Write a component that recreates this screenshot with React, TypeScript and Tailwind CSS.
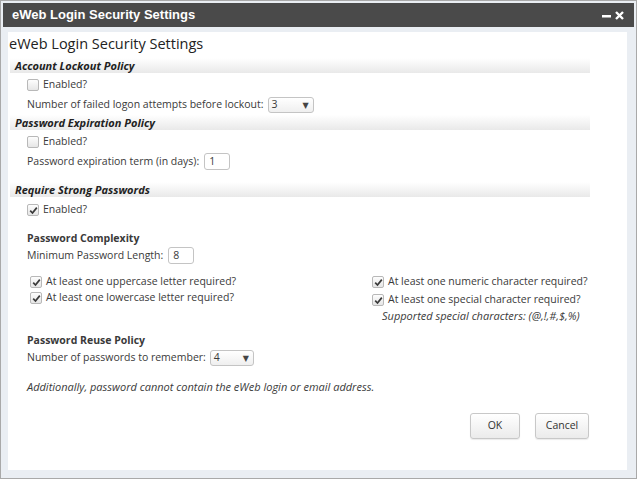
import { ReactNode } from 'react'

const FONT = { fontFamily: '"Open Sans", "DejaVu Sans", sans-serif' }

function Check({ checked }: { checked?: boolean }) {
  return (
    <span className="inline-flex h-[12px] w-[12px] shrink-0 items-center justify-center rounded-[2px] border border-[#b8b8b8] bg-gradient-to-b from-[#fdfdfd] to-[#e6e6e6]">
      {checked && (
        <svg width="9" height="9" viewBox="0 0 9 9">
          <path d="M1.2 4.6 L3.5 7 L7.8 1.6" fill="none" stroke="#3a3a3a" strokeWidth="1.7" />
        </svg>
      )}
    </span>
  )
}

function CheckRow({ checked, label, className = '' }: { checked?: boolean; label: string; className?: string }) {
  return (
    <div className={`flex items-center gap-[4px] ${className}`}>
      <Check checked={checked} />
      <span>{label}</span>
    </div>
  )
}

function SectionBar({ children }: { children: ReactNode }) {
  return (
    <div className="mx-[2px] h-[15px] w-[580px] bg-gradient-to-b from-white to-[#e9e9e9] pl-[5px] text-[11px] font-bold italic leading-[15px] text-[#222]">
      {children}
    </div>
  )
}

function Select({ value, w }: { value: string; w: string }) {
  return (
    <span className={`ml-[4px] inline-flex h-[16px] ${w} items-center justify-between rounded-[3px] border border-[#c4c4c4] bg-gradient-to-b from-white to-[#efefef] pl-[3px] pr-[4px] text-[10.5px]`}>
      <span>{value}</span>
      <span className="text-[8px] text-[#444]">▼</span>
    </span>
  )
}

function TextBox({ value }: { value: string }) {
  return (
    <span className="ml-[5px] inline-flex h-[17px] w-[26px] items-center rounded-[3px] border border-[#c4c4c4] bg-white pl-[4px] text-[10.5px]">
      {value}
    </span>
  )
}

function Btn({ children, w }: { children: ReactNode; w: string }) {
  return (
    <button className={`h-[26px] ${w} rounded-[3px] border border-[#c8c8c8] bg-gradient-to-b from-white to-[#ebebeb] text-[10.5px] text-[#333] shadow-[0_1px_1px_rgba(0,0,0,0.08)]`}>
      {children}
    </button>
  )
}

export default function App() {
  return (
    <div style={FONT} className="flex h-[479px] w-[637px] flex-col border border-[#a9a9a9] bg-[#eaeef3] p-[2px] text-[10.5px] text-[#3a3a3a]">
      <div className="flex h-[24px] shrink-0 items-center justify-between bg-[#4a4a4a] pl-[9px] pr-[10px]">
        <span className="text-[13px] font-bold text-white" style={{ fontFamily: '"Liberation Sans", Arial, sans-serif' }}>
          eWeb Login Security Settings
        </span>
        <span className="flex items-center gap-[4px]">
          <svg width="9" height="9" viewBox="0 0 9 9"><rect x="0" y="4" width="9" height="2.5" fill="#fff" /></svg>
          <svg width="9" height="9" viewBox="0 0 9 9"><path d="M1 1 L8 8 M8 1 L1 8" stroke="#fff" strokeWidth="2.4" /></svg>
        </span>
      </div>

      <div className="ml-[5px] mr-[7px] mt-[5px] flex-1 bg-white pt-[2px]">
        <div className="pl-[1px] text-[14.5px] leading-[20px] text-[#222]">eWeb Login Security Settings</div>

        <div className="mt-[4px]">
          <SectionBar>Account Lockout Policy</SectionBar>
          <div className="pl-[19px]">
            <CheckRow label="Enabled?" className="mt-[3px] h-[18px]" />
            <div className="flex h-[21px] items-center">
              Number of failed logon attempts before lockout:
              <Select value="3" w="w-[46px]" />
            </div>
          </div>
        </div>

        <div>
          <SectionBar>Password Expiration Policy</SectionBar>
          <div className="pl-[19px]">
            <CheckRow label="Enabled?" className="mt-[3px] h-[18px]" />
            <div className="flex h-[21px] items-center">
              Password expiration term (in days):
              <TextBox value="1" />
            </div>
          </div>
        </div>

        <div className="mt-[10px]">
          <SectionBar>Require Strong Passwords</SectionBar>
          <div className="pl-[19px]">
            <CheckRow checked label="Enabled?" className="mt-[4px] h-[18px]" />

            <div className="mt-[11px] h-[16px] font-bold leading-[16px]">Password Complexity</div>
            <div className="flex h-[19px] items-center">
              Minimum Password Length:
              <TextBox value="8" />
            </div>

            <div className="mt-[9px] flex">
              <div className="w-[345px] pl-[3px]">
                <CheckRow checked label="At least one uppercase letter required?" className="h-[16px]" />
                <CheckRow checked label="At least one lowercase letter required?" className="h-[16px]" />
              </div>
              <div>
                <CheckRow checked label="At least one numeric character required?" className="h-[16px]" />
                <CheckRow checked label="At least one special character required?" className="mt-[2px] h-[16px]" />
                <div className="h-[16px] pl-[10px] text-[11px] italic leading-[16px]">Supported special characters: (@,!,#,$,%)</div>
              </div>
            </div>

            <div className="mt-[8px] h-[16px] font-bold leading-[16px]">Password Reuse Policy</div>
            <div className="flex h-[19px] items-center">
              Number of passwords to remember:
              <Select value="4" w="w-[44px]" />
            </div>

            <div className="mt-[12px] h-[16px] text-[11px] italic leading-[16px]">
              Additionally, password cannot contain the eWeb login or email address.
            </div>
          </div>
        </div>

        <div className="mt-[18px] flex justify-end gap-[15px] pr-[38px]">
          <Btn w="w-[50px]">OK</Btn>
          <Btn w="w-[54px]">Cancel</Btn>
        </div>
      </div>
      <div className="h-[6px] shrink-0" />
    </div>
  )
}
